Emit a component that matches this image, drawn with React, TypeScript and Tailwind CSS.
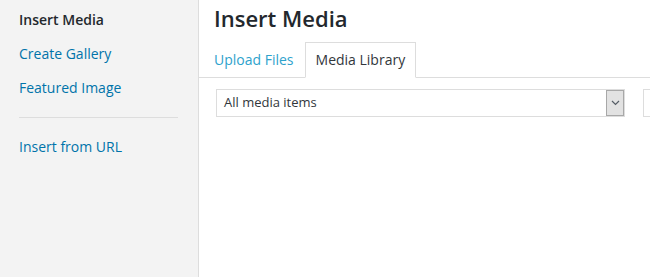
import React from 'react'

const menuItems = ['Create Gallery', 'Featured Image']

const App = () => {
    return (
        <div className="flex h-[277px] w-[650px] overflow-hidden bg-white font-['Open_Sans',sans-serif]">
            <aside className="w-[199px] shrink-0 border-r border-[#dddddd] bg-[#f3f3f3] pt-[3px] pl-[19px] pr-[20px]">
                <div className="py-[7px] text-[14px] leading-5 font-semibold text-[#23282d]">Insert Media</div>
                {menuItems.map((item) => (
                    <div key={item} className="py-[7px] text-[14px] leading-5 text-[#0073aa]">{item}</div>
                ))}
                <div className="my-3 h-px bg-[#dddddd]"></div>
                <div className="py-[7px] text-[14px] leading-5 text-[#0073aa]">Insert from URL</div>
            </aside>

            <main className="flex min-w-0 flex-1 flex-col">
                <h1 className="pt-[3px] pl-[15px] text-[22px] leading-[30px] font-semibold text-[#23282d]">Insert Media</h1>

                <div className="mt-[9px] flex items-end border-b border-[#dddddd] pl-[4px]">
                    <div className="-mb-px border border-transparent px-[10px] py-[7px] text-[14px] leading-5 text-[#2ea2cc]">Upload Files</div>
                    <div className="-mb-px border border-[#dddddd] border-b-white bg-white px-[10px] py-[7px] text-[14px] leading-5 text-[#32373c]">Media Library</div>
                </div>

                <div className="mt-[11px] flex pl-[17px]">
                    <div className="flex h-[28px] w-[409px] shrink-0 items-center border border-[#dddddd] pl-[7px]">
                        <span className="flex-1 text-[13px] text-[#32373c]">All media items</span>
                        <div className="flex h-[26px] w-[18px] items-center justify-center border border-[#a8a8a8] bg-[#e2e2e2]">
                            <svg width="9" height="6" viewBox="0 0 9 6" fill="none">
                                <path d="M1 1l3.5 3.5L8 1" stroke="#555d66" strokeWidth="1.2" />
                            </svg>
                        </div>
                    </div>
                    <div className="ml-[18px] h-[28px] w-[120px] shrink-0 border border-[#dddddd]"></div>
                </div>
            </main>
        </div>
    )
}

export default App
